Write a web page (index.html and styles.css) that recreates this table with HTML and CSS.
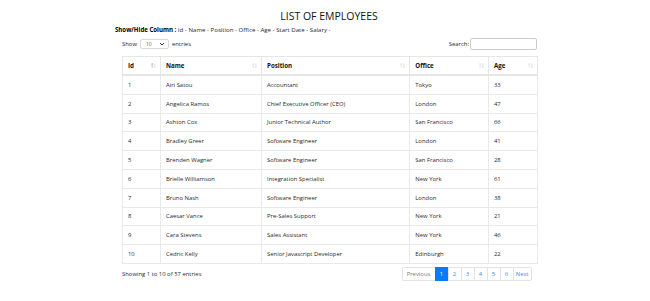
FILE: index.html
```html
<!DOCTYPE html>
<html>
<head>
<meta charset="utf-8">
<link rel="stylesheet" href="styles.css">
</head>
<body>
<div class="page">
  <h1 class="title">LIST OF EMPLOYEES</h1>
  <div class="toggles"><b>Show/Hide Column :</b> Id - Name - Position - Office - Age - Start Date - Salary -</div>
  <div class="dt">
    <div class="dt-top">
      <label class="length">Show <span class="select">10<svg width="6" height="4" viewBox="0 0 6 4"><path d="M1 1l2 2 2-2" fill="none" stroke="#333" stroke-width="1"/></svg></span> entries</label>
      <label class="search">Search: <span class="input"></span></label>
    </div>
    <table class="tbl">
      <colgroup>
        <col class="c-id"><col class="c-name"><col class="c-pos"><col class="c-off"><col class="c-age">
      </colgroup>
      <thead>
        <tr>
          <th><span>Id</span><svg class="sort" width="5" height="5" viewBox="0 0 5 5"><path d="M1.2 4.8V0.5M0.2 1.5l1-1 1 1" stroke="#999" stroke-width="0.6" fill="none"/><path d="M3.8 0.2v4.3M2.8 3.5l1 1 1-1" stroke="#d4d4d4" stroke-width="0.6" fill="none"/></svg></th>
          <th><span>Name</span><svg class="sort" width="5" height="5" viewBox="0 0 5 5"><path d="M1.2 4.8V0.5M0.2 1.5l1-1 1 1M3.8 0.2v4.3M2.8 3.5l1 1 1-1" stroke="#d4d4d4" stroke-width="0.6" fill="none"/></svg></th>
          <th><span>Position</span><svg class="sort" width="5" height="5" viewBox="0 0 5 5"><path d="M1.2 4.8V0.5M0.2 1.5l1-1 1 1M3.8 0.2v4.3M2.8 3.5l1 1 1-1" stroke="#d4d4d4" stroke-width="0.6" fill="none"/></svg></th>
          <th><span>Office</span><svg class="sort" width="5" height="5" viewBox="0 0 5 5"><path d="M1.2 4.8V0.5M0.2 1.5l1-1 1 1M3.8 0.2v4.3M2.8 3.5l1 1 1-1" stroke="#d4d4d4" stroke-width="0.6" fill="none"/></svg></th>
          <th><span>Age</span><svg class="sort" width="5" height="5" viewBox="0 0 5 5"><path d="M1.2 4.8V0.5M0.2 1.5l1-1 1 1M3.8 0.2v4.3M2.8 3.5l1 1 1-1" stroke="#d4d4d4" stroke-width="0.6" fill="none"/></svg></th>
        </tr>
      </thead>
      <tbody>
        <tr><td>1</td><td>Airi Satou</td><td>Accountant</td><td>Tokyo</td><td>33</td></tr>
        <tr><td>2</td><td>Angelica Ramos</td><td>Chief Executive Officer (CEO)</td><td>London</td><td>47</td></tr>
        <tr><td>3</td><td>Ashton Cox</td><td>Junior Technical Author</td><td>San Francisco</td><td>66</td></tr>
        <tr><td>4</td><td>Bradley Greer</td><td>Software Engineer</td><td>London</td><td>41</td></tr>
        <tr><td>5</td><td>Brenden Wagner</td><td>Software Engineer</td><td>San Francisco</td><td>28</td></tr>
        <tr><td>6</td><td>Brielle Williamson</td><td>Integration Specialist</td><td>New York</td><td>61</td></tr>
        <tr><td>7</td><td>Bruno Nash</td><td>Software Engineer</td><td>London</td><td>38</td></tr>
        <tr><td>8</td><td>Caesar Vance</td><td>Pre-Sales Support</td><td>New York</td><td>21</td></tr>
        <tr><td>9</td><td>Cara Stevens</td><td>Sales Assistant</td><td>New York</td><td>46</td></tr>
        <tr><td>10</td><td>Cedric Kelly</td><td>Senior Javascript Developer</td><td>Edinburgh</td><td>22</td></tr>
      </tbody>
    </table>
    <div class="dt-bottom">
      <div class="info">Showing 1 to 10 of 57 entries</div>
      <ul class="pager">
        <li class="pg prev">Previous</li>
        <li class="pg active">1</li>
        <li class="pg">2</li>
        <li class="pg">3</li>
        <li class="pg">4</li>
        <li class="pg">5</li>
        <li class="pg">6</li>
        <li class="pg next">Next</li>
      </ul>
    </div>
  </div>
</div>
</body>
</html>
```
FILE: styles.css
```css
html, body {
  margin: 0;
  padding: 0;
  background: #fff;
}
body {
  font-family: "Open Sans", "Noto Sans", sans-serif;
  color: #222;
  font-size: 6px;
}
.page {
  width: 428px;
  margin-left: 115px;
  padding-top: 9px;
}
.title {
  margin: 0;
  text-align: center;
  font-size: 10.5px;
  font-weight: 500;
  line-height: 14px;
  color: #111;
}
.toggles {
  margin-top: 2px;
  line-height: 10px;
  font-size: 6.1px;
  color: #2a2a2a;
}
.toggles b {
  color: #000;
}
.dt {
  padding: 0 6px 0 7px;
}
.dt-top {
  display: flex;
  justify-content: space-between;
  align-items: center;
  height: 14px;
  margin-top: 2px;
}
.length {
  display: flex;
  align-items: center;
  gap: 3px;
  color: #2a2a2a;
  font-size: 5.9px;
}
.select {
  display: inline-flex;
  align-items: center;
  justify-content: space-between;
  box-sizing: border-box;
  width: 29px;
  height: 10px;
  border: 1px solid #d9d9d9;
  border-radius: 2px;
  padding: 0 3px 0 5px;
  font-size: 5px;
  color: #666;
}
.search {
  display: flex;
  align-items: center;
  gap: 1px;
  color: #2a2a2a;
  font-size: 5.9px;
}
.input {
  display: inline-block;
  box-sizing: border-box;
  width: 67px;
  height: 11.5px;
  border: 1px solid #ccc;
  border-radius: 2px;
}
.tbl {
  margin-top: 4.5px;
  width: 415px;
  border-collapse: collapse;
  table-layout: fixed;
  border: 1px solid #e6e6e6;
}
.c-id { width: 38px; }
.c-name { width: 101px; }
.c-pos { width: 148.3px; }
.c-off { width: 78.7px; }
.c-age { width: 49px; }
.tbl th {
  position: relative;
  height: 17.5px;
  padding: 0 5px;
  text-align: left;
  font-weight: 700;
  color: #111;
  font-size: 6.2px;
  border: 1px solid #e6e6e6;
  border-bottom: 2px solid #e6e6e6;
}
.tbl th .sort {
  position: absolute;
  right: 4px;
  top: 6px;
}
.tbl td {
  height: 17.8px;
  padding: 0 5px;
  border: 1px solid #e9e9e9;
  font-size: 5.9px;
  color: #2a2a2a;
  white-space: nowrap;
}
.dt-bottom {
  display: flex;
  justify-content: space-between;
  align-items: center;
  margin-top: 3.5px;
  padding-right: 5px;
}
.info {
  font-size: 5.9px;
  color: #2a2a2a;
}
.pager {
  display: flex;
  list-style: none;
  margin: 0;
  padding: 0;
}
.pg {
  box-sizing: border-box;
  height: 14px;
  width: 14px;
  display: flex;
  align-items: center;
  justify-content: center;
  border: 1px solid #e3e3e3;
  margin-left: -1px;
  color: #3a8ef0;
  font-size: 5.9px;
}
.pg.prev {
  width: 34px;
  margin-left: 0;
  color: #7a7a7a;
  border-radius: 2px 0 0 2px;
}
.pg.next {
  width: 19.5px;
  border-radius: 0 2px 2px 0;
}
.pg.active {
  background: #0a7bf5;
  border-color: #0a7bf5;
  color: #fff;
}
```
